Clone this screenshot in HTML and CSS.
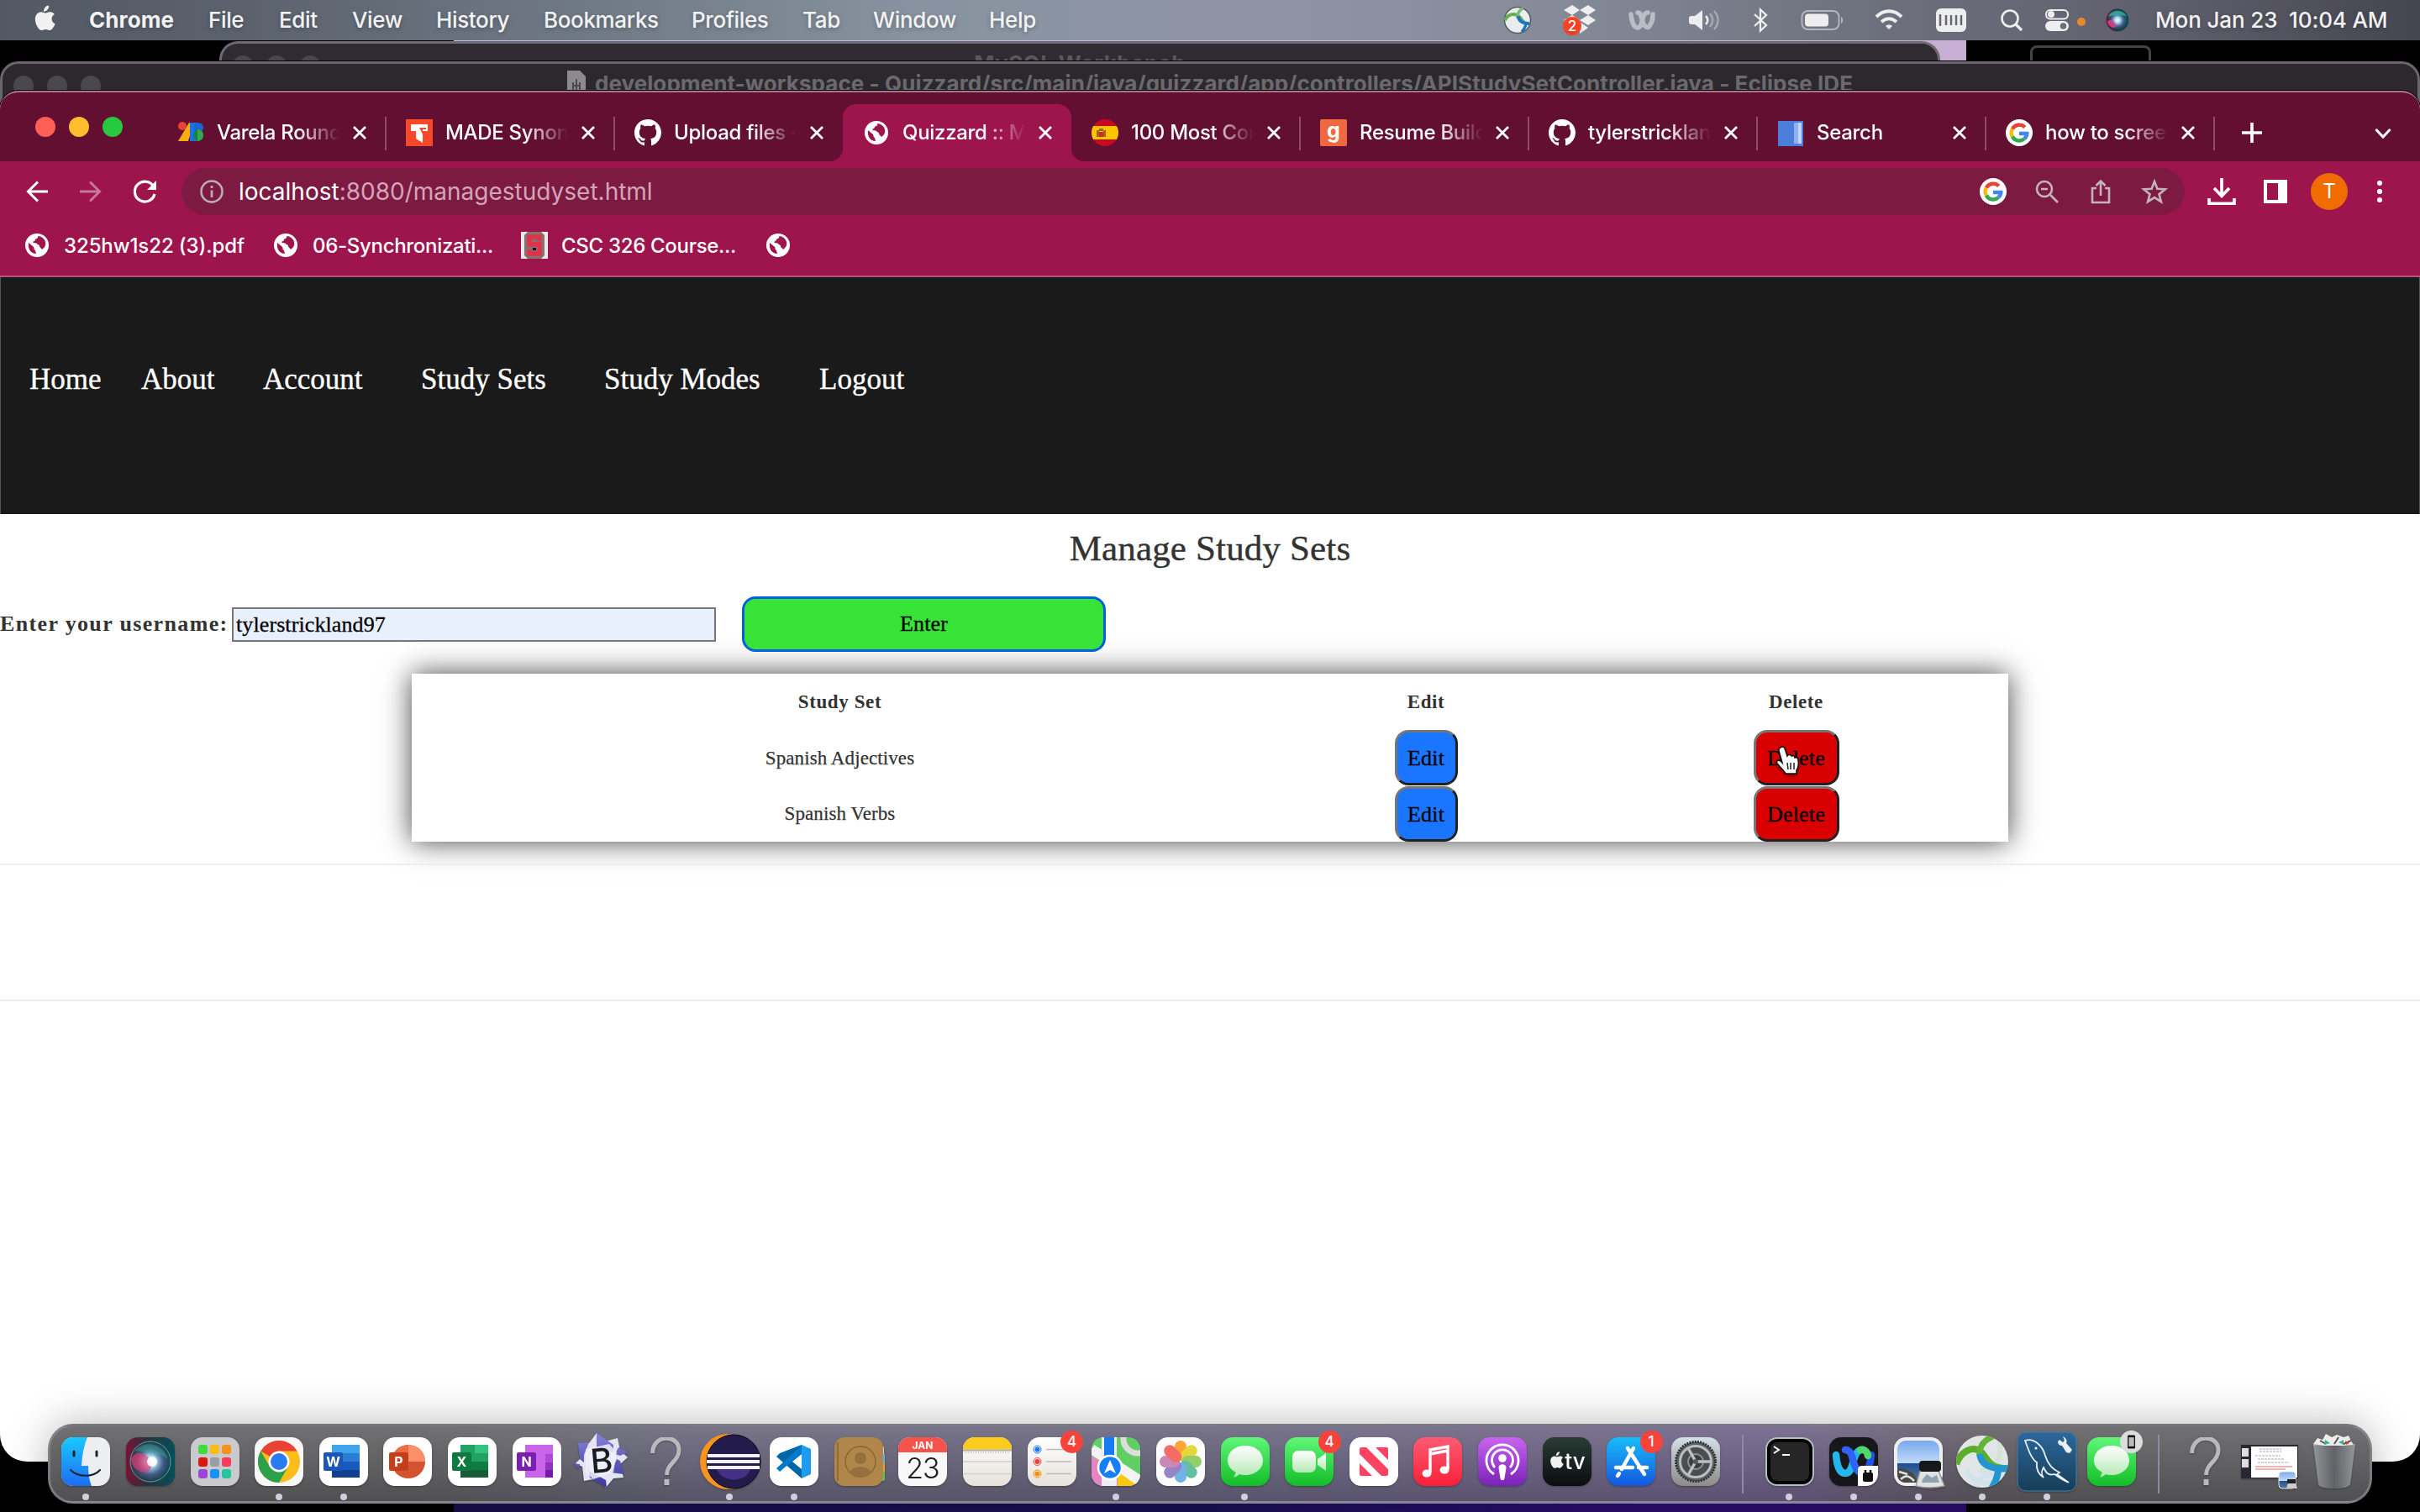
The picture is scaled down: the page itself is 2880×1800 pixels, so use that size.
FILE: index.html
```html
<!DOCTYPE html>
<html lang="en">
<head>
<meta charset="utf-8">
<title>Quizzard :: Manage Study Sets</title>
<link rel="stylesheet" href="styles.css">
</head>
<body>
<svg width="0" height="0" class="defs">
  <defs>
    <symbol id="globe" viewBox="0 0 28 28"><circle cx="14" cy="14" r="14" fill="#fff"/><path d="M4 11l6 5c1 2 0 3 2 4l1 4c-6 0-10-5-9-13zM15 3c1 2-1 3-3 4 0 2-2 2-3 3 1 2 4 1 5 2 1 2 3 1 3 3 0 2 2 2 3 4 3-2 5-5 4-9-1-4-5-7-9-7z" fill="#9e154e"/></symbol>
    <symbol id="github" viewBox="0 0 16 16"><path fill="#fff" d="M8 0C3.58 0 0 3.58 0 8c0 3.54 2.29 6.53 5.47 7.59.4.07.55-.17.55-.38 0-.19-.01-.82-.01-1.49-2.01.37-2.53-.49-2.69-.94-.09-.23-.48-.94-.82-1.13-.28-.15-.68-.52-.01-.53.63-.01 1.08.58 1.23.82.72 1.21 1.87.87 2.33.66.07-.52.28-.87.51-1.07-1.78-.2-3.64-.89-3.64-3.95 0-.87.31-1.59.82-2.15-.08-.2-.36-1.02.08-2.12 0 0 .67-.21 2.2.82.64-.18 1.32-.27 2-.27s1.36.09 2 .27c1.53-1.04 2.2-.82 2.2-.82.44 1.1.16 1.92.08 2.12.51.56.82 1.27.82 2.15 0 3.07-1.87 3.75-3.65 3.95.29.25.54.73.54 1.48 0 1.07-.01 1.93-.01 2.2 0 .21.15.46.55.38A8.01 8.01 0 0 0 16 8c0-4.42-3.58-8-8-8z"/></symbol>
    <symbol id="google" viewBox="0 0 32 32"><circle cx="16" cy="16" r="16" fill="#fff"/><g fill="none" stroke-width="4.4"><path d="M22.8 9.4A9.4 9.4 0 0 0 7.8 11.6" stroke="#ea4335"/><path d="M7.8 11.6a9.4 9.4 0 0 0 0 9" stroke="#fbbc05"/><path d="M7.8 20.6a9.4 9.4 0 0 0 14.4 2.6" stroke="#34a853"/><path d="M22.2 23.2c2-1.8 3.1-4 3.1-6.2H16" stroke="#4285f4"/></g></symbol>
    <symbol id="cross" viewBox="0 0 20 20"><path d="M3 3l14 14M17 3L3 17" stroke="#fff" stroke-width="2.800" fill="none"/></symbol>
    <symbol id="apple" viewBox="0 0 26 32"><path d="M18.2.5c.2 2-.6 3.800-1.700 5.100-1.200 1.400-2.900 2.300-4.500 2.200-.2-1.900.7-3.900 1.700-5.100C14.900 1.400 16.800.5 18.200.5zM24.800 11c-.3.200-3.300 2-3.200 5.600 0 4.300 3.800 5.800 3.900 5.800-.1.200-.6 2.100-2 4.100-1.200 1.800-2.500 3.500-4.500 3.600-1.900 0-2.600-1.200-4.800-1.200s-2.900 1.200-4.700 1.200c-2 .1-3.400-1.900-4.600-3.700C2.400 22.800.5 16.200 3.100 11.800c1.300-2.200 3.500-3.600 6-3.600 1.900 0 3.700 1.300 4.800 1.300 1.200 0 3.300-1.600 5.600-1.300 1 0 3.600.4 5.300 2.800z" fill="#f1f1f1"/></symbol>
    <symbol id="bubble" viewBox="0 0 58 58"><rect width="58" height="58" rx="14" fill="url(#gGreen)"/><path d="M29 10c12 0 21 7.500 21 17.500S41 45 29 45c-3 0-5-.4-7-1-2 2-4 3-7 3.500 1.500-2 2.500-4 2.500-6C11.500 38.500 8 33.500 8 27.500 8 17.500 17 10 29 10z" fill="url(#gBub)"/></symbol>
    <symbol id="ask" viewBox="0 0 58 58"><path d="M13.500 19C14-4.500 45-3.500 45 15c0 14-14.500 16-14.500 30" fill="none" stroke="#b9b9bd" stroke-width="5"/><rect x="27.500" y="50" width="6" height="7" fill="#b9b9bd"/></symbol>
    <linearGradient id="gGreen" x2="0" y2="1"><stop stop-color="#60f77a"/><stop offset="1" stop-color="#12bd27"/></linearGradient>
    <linearGradient id="gBub" x2="0" y2="1"><stop stop-color="#fff"/><stop offset="1" stop-color="#b4e8b4"/></linearGradient>
    <linearGradient id="gFind" x2="0" y2="1"><stop stop-color="#19c9ff"/><stop offset="1" stop-color="#1d6df5"/></linearGradient>
    <linearGradient id="gMusic" x2="0" y2="1"><stop stop-color="#fc5c74"/><stop offset="1" stop-color="#fa2038"/></linearGradient>
    <linearGradient id="gPod" x2="0" y2="1"><stop stop-color="#c964f0"/><stop offset="1" stop-color="#7a22b8"/></linearGradient>
    <linearGradient id="gStore" x2="0" y2="1"><stop stop-color="#18bdfa"/><stop offset="1" stop-color="#1358dd"/></linearGradient>
    <linearGradient id="gTv" x2="0" y2="1"><stop stop-color="#2a3c35"/><stop offset="1" stop-color="#0a0d10"/></linearGradient>
    <linearGradient id="gSet" x2="0" y2="1"><stop stop-color="#d3dfe6"/><stop offset="1" stop-color="#8d8b88"/></linearGradient>
    <linearGradient id="gPaper" x2="0" y2="1"><stop stop-color="#fff"/><stop offset="1" stop-color="#e6e2da"/></linearGradient>
    <linearGradient id="gSql" x2="0" y2="1"><stop stop-color="#2d679b"/><stop offset="1" stop-color="#163d58"/></linearGradient>
    <linearGradient id="gSiri"><stop stop-color="#7a1236"/><stop offset=".45" stop-color="#26333c"/><stop offset="1" stop-color="#04505a"/></linearGradient>
    <linearGradient id="gBbe" x2="0" y2="1"><stop stop-color="#8581da"/><stop offset="1" stop-color="#3c37a0"/></linearGradient>
    <radialGradient id="gOrb"><stop stop-color="#fff"/><stop offset=".3" stop-color="#9fd8ec"/><stop offset=".65" stop-color="#53659c" stop-opacity=".75"/><stop offset="1" stop-color="#17414f" stop-opacity=".6"/></radialGradient>
    <linearGradient id="gBin"><stop stop-color="#9b9fa3"/><stop offset=".5" stop-color="#62676b"/><stop offset="1" stop-color="#9b9fa3"/></linearGradient>
    <linearGradient id="gSky" x2="0" y2="1"><stop stop-color="#78a8ee"/><stop offset=".55" stop-color="#c3dcf7"/><stop offset=".55" stop-color="#1d4f96"/><stop offset="1" stop-color="#5f7a96"/></linearGradient>
  </defs>
</svg>

<div class="desktop">
  <div class="wallpaper"></div>
  <div class="outline-box"></div>

  <header class="menubar">
    <nav class="menus">
      <svg class="apple" width="26" height="32"><use href="#apple"/></svg>
      <b>Chrome</b><span>File</span><span>Edit</span><span>View</span><span>History</span><span>Bookmarks</span><span>Profiles</span><span>Tab</span><span>Window</span><span>Help</span>
    </nav>
    <div class="status">
      <svg width="34" height="34" viewBox="0 0 34 34"><circle cx="17" cy="17" r="15.500" fill="#e9edf0" stroke="#555a5f" stroke-width="1.500"/><path d="M2 17C6 9 14 8 19 13s4 8 12 8" fill="none" stroke="#65ae4c" stroke-width="4"/><path d="M17 15C17 7 20 4 24 3" fill="none" stroke="#7dbb74" stroke-width="3.500"/><path d="M18 12c0 7 5 9 13 9M27 19c0 5-2 9-5 12" fill="none" stroke="#1a74c4" stroke-width="3.500"/></svg>
      <svg width="40" height="38" viewBox="0 0 40 38"><path d="M11 1l9 6-9 6-10-6zM30 1l9 6-9 6-10-6zM11 13l9 6-9 6-10-6zM30 13l9 6-9 6-10-6zM20 21l10 7-10 7z" fill="#eee"/><circle cx="11" cy="26" r="11" fill="#fc4424"/><text x="11" y="32" class="t-badge" font-size="17">2</text></svg>
      <svg width="32" height="24" viewBox="0 0 32 24" fill="none" stroke="#b9bdc6" stroke-width="5.500" stroke-linecap="round"><path d="M3 5c1 10 4 16 8 16s5-7 6-11 3-7 6-7"/><path d="M11 3c4 0 4 5 6 11s6 8 8 5c3-4 4-9 4-14"/></svg>
      <svg width="38" height="28" viewBox="0 0 38 28"><path d="M4 9h4l9-7v24l-9-7H4q-3 0-3-3v-4q0-3 3-3z" fill="#eee"/><path d="M21 9c3 3 3 7 0 10" fill="none" stroke="#eee" stroke-width="2.500"/><path d="M26 6c4 5 4 11 0 16M31 3c6 7 6 15 0 22" fill="none" stroke="#a6aab3" stroke-width="2.500"/></svg>
      <svg width="18" height="28" viewBox="0 0 18 28"><path d="M2 7l14 13-7 6.500v-25L16 8 2 21" fill="none" stroke="#eee" stroke-width="2.300"/></svg>
      <svg width="52" height="26" viewBox="0 0 52 26"><rect x="1.500" y="2" width="44" height="22" rx="7" fill="none" stroke="#b3b6bd" stroke-width="2"/><rect x="5" y="5.500" width="28" height="15" rx="4" fill="#eee"/><path d="M48 9c3 2 3 6 0 8z" fill="#b3b6bd"/></svg>
      <svg width="34" height="26" viewBox="0 0 34 26" fill="none" stroke="#eee" stroke-width="4"><path d="M2 9c9-9 21-9 30 0"/><path d="M8 15c6-5 12-5 18 0"/><path d="M17 24l-4-4c2-2 6-2 8 0z" fill="#eee" stroke="none"/></svg>
      <svg width="36" height="28" viewBox="0 0 36 28"><rect width="36" height="28" rx="6" fill="#eee"/><path d="M5 7v14M12 8v12M18 8v12M24 8v12M30 8v12" stroke="#646874" stroke-width="2.500"/></svg>
      <svg width="28" height="28" viewBox="0 0 28 28"><circle cx="12" cy="12" r="9.500" fill="none" stroke="#eee" stroke-width="2.600"/><path d="M19 19l7 7" stroke="#eee" stroke-width="3.200"/></svg>
      <svg width="28" height="26" viewBox="0 0 28 26"><rect x="1" y="1" width="26" height="10.500" rx="5" fill="none" stroke="#eee" stroke-width="2"/><circle cx="7" cy="6" r="4" fill="#eee"/><rect y="14" width="28" height="12" rx="6" fill="#eee"/><circle cx="21.500" cy="20" r="3.800" fill="#6b6e78"/></svg>
      <svg width="10" height="10" class="low"><circle cx="5" cy="5" r="5" fill="#e5892a"/></svg>
      <svg width="28" height="28" viewBox="0 0 58 58"><circle cx="29" cy="29" r="28" fill="url(#gSiri)"/><circle cx="29" cy="29" r="24" fill="url(#gOrb)"/><path d="M6 20c8-18 36-20 46 0-14-6-24-4-46 0z" fill="#2cb69c" opacity=".8"/><path d="M4 32c8-8 20 0 22 12-8 8-20 0-22-12z" fill="#e0408c" opacity=".8"/></svg>
      <span class="clock">Mon Jan 23&nbsp; 10:04 AM</span>
    </div>
  </header>

  <section class="window workbench">
    <div class="dim-lights"><i></i><i></i><i></i></div>
    <div class="dim-title">MySQL Workbench</div>
  </section>

  <section class="window eclipse">
    <div class="dim-lights"><i></i><i></i><i></i></div>
    <div class="dim-title"><svg width="22" height="28" viewBox="0 0 22 28"><path d="M0 0h15l7 7v21H0z" fill="#8c8a8e"/><path d="M7 14v9M15 14v9M11 10v14M7 18h8" fill="none" stroke="#4b494d" stroke-width="2"/></svg><span>development-workspace - Quizzard/src/main/java/quizzard/app/controllers/APIStudySetController.java - Eclipse IDE</span></div>
  </section>

  <section class="window chrome">
    <div class="tabstrip">
      <div class="lights"><i class="red"></i><i class="yellow"></i><i class="green"></i></div>
      <div class="tab"><svg class="fav" viewBox="0 0 32 32"><path d="M14 4h6L13 26H1z" fill="#fbab12"/><circle cx="6" cy="8" r="5" fill="#e94335"/><path d="M15 4h9v22h-9z" fill="#1a73e8"/><circle cx="25" cy="10" r="6" fill="#1967d2"/><path d="M24 12a7 7 0 0 1 0 14c-6-3-6-11 0-14z" fill="#188038"/><path d="M24 12a7 7 0 0 1 0 14z" fill="#34a853"/></svg><span class="name">Varela Round</span><svg class="x"><use href="#cross"/></svg></div>
      <div class="tab"><svg class="fav" viewBox="0 0 32 32"><rect width="32" height="32" fill="#f8482a"/><path d="M6 6h20v8h-6v14l-8-5v-9H6z" fill="#fff"/><path d="M16 10h8v2h-4v6z" fill="#f8482a"/></svg><span class="name">MADE Synon</span><svg class="x"><use href="#cross"/></svg></div>
      <div class="tab nosep"><svg class="fav"><use href="#github"/></svg><span class="name">Upload files ·</span><svg class="x"><use href="#cross"/></svg></div>
      <div class="tab active"><svg class="fav" viewBox="-2 -2 32 32"><use href="#globe" width="28" height="28"/></svg><span class="name">Quizzard :: Ma</span><svg class="x"><use href="#cross"/></svg></div>
      <div class="tab"><svg class="fav" viewBox="0 0 32 32"><clipPath id="cf"><circle cx="16" cy="16" r="16"/></clipPath><g clip-path="url(#cf)"><rect width="32" height="32" fill="#c60b1e"/><rect y="8" width="32" height="16" fill="#ffc400"/><path d="M6 13h3v8H6zM14 13h3v8h-3zM9 11h5v3H9z" fill="#a5612a"/><path d="M9 15h5v6H9z" fill="#c8302c"/></g></svg><span class="name">100 Most Con</span><svg class="x"><use href="#cross"/></svg></div>
      <div class="tab"><svg class="fav" viewBox="0 0 32 32"><rect width="32" height="32" rx="2" fill="#ef6840"/><text x="16" y="22" font-size="25" class="t-fav">g</text></svg><span class="name">Resume Build</span><svg class="x"><use href="#cross"/></svg></div>
      <div class="tab"><svg class="fav"><use href="#github"/></svg><span class="name">tylerstrickland</span><svg class="x"><use href="#cross"/></svg></div>
      <div class="tab"><svg class="fav" viewBox="0 0 32 32"><path d="M1 2h30v30H1z" fill="#4c7fdc"/><path d="M20 4h9v25h-9z" fill="#8fb1ee"/><path d="M25 4h4v25h-4z" fill="#c2d5f7"/></svg><span class="name">Search</span><svg class="x"><use href="#cross"/></svg></div>
      <div class="tab"><svg class="fav"><use href="#google"/></svg><span class="name">how to screen</span><svg class="x"><use href="#cross"/></svg></div>
      <svg class="plus" width="24" height="24" viewBox="0 0 24 24"><path d="M12 0v24M0 12h24" stroke="#fff" stroke-width="3.600"/></svg>
      <svg class="chev" width="20" height="14" viewBox="0 0 20 14"><path d="M1.500 2l8.500 9 8.500-9" fill="none" stroke="#fff" stroke-width="3"/></svg>
    </div>

    <div class="toolbar">
      <svg width="26" height="26" viewBox="0 0 26 26" fill="none" stroke="#fff" stroke-width="3"><path d="M26 13H3M14 1.500L2.500 13 14 24.500"/></svg>
      <svg width="26" height="26" viewBox="0 0 26 26" fill="none" stroke="#c6779b" stroke-width="3"><path d="M0 13h23M12 1.500L23.500 13 12 24.500"/></svg>
      <svg width="28" height="28" viewBox="0 0 28 28"><path d="M24 8.500A12 12 0 1 0 25 17" fill="none" stroke="#fff" stroke-width="3.200"/><path d="M27 1v11H16z" fill="#fff"/></svg>
      <div class="omnibox">
        <svg class="info" width="28" height="28" viewBox="0 0 28 28"><circle cx="14" cy="14" r="12.500" fill="none" stroke="#b9adb5" stroke-width="2.600"/><path d="M14 12.500V21M14 7v3" stroke="#b9adb5" stroke-width="2.800"/></svg>
        <span class="url">localhost<em>:8080/managestudyset.html</em></span>
        <svg width="32" height="32"><use href="#google"/></svg>
        <svg width="32" height="32" viewBox="0 0 32 32" fill="none" stroke="#c4b3bb" stroke-width="2.600"><circle cx="13" cy="13" r="9"/><path d="M9 13h8M20 20l9 9"/></svg>
        <svg width="32" height="32" viewBox="0 0 32 32" fill="none" stroke="#c4b3bb" stroke-width="2.600"><path d="M11 12H6v17h20V12h-5M16 21V4M10.500 9L16 3.500 21.500 9"/></svg>
        <svg width="32" height="32" viewBox="0 0 32 32" fill="none" stroke="#c4b3bb" stroke-width="2.600"><path d="M16 4l3.400 8.800 9.300.5-7.200 5.900 2.400 9L16 23.100l-7.900 5.100 2.400-9-7.200-5.900 9.300-.5z"/></svg>
      </div>
      <div class="actions">
        <svg width="34" height="32" viewBox="0 0 34 32" fill="none" stroke="#fff" stroke-width="3.600"><path d="M17 0v21M8 12l9 9.500 9-9.500M2 24v6.200h30V24"/></svg>
        <svg width="28" height="28" viewBox="0 0 28 28"><path d="M0 0h28v28H0zM4 4v20h13V4z" fill="#fff" fill-rule="evenodd"/></svg>
        <span class="avatar">T</span>
        <svg width="8" height="28" viewBox="0 0 8 28" fill="#fff"><circle cx="4" cy="4" r="3"/><circle cx="4" cy="14" r="3"/><circle cx="4" cy="24" r="3"/></svg>
      </div>
    </div>

    <div class="bookmarks">
      <svg width="28" height="28"><use href="#globe"/></svg><span>325hw1s22 (3).pdf</span>
      <svg width="28" height="28"><use href="#globe"/></svg><span>06-Synchronizati...</span>
      <svg class="nc" width="32" height="32" viewBox="0 0 32 32"><rect width="32" height="32" fill="#eee9e6"/><path d="M8 0h16l4 4v24l-4 4H8l-4-4V4z" fill="#7d7472"/><path d="M22 11V6H10v9h12v11H10v-5" fill="none" stroke="#e5304a" stroke-width="5.500"/><path d="M14 19h4v3h-4z" fill="#111"/></svg><span>CSC 326 Course...</span>
      <svg width="28" height="28"><use href="#globe"/></svg>
    </div>

    <main class="page">
      <nav class="site-nav"><a>Home</a><a>About</a><a>Account</a><a>Study Sets</a><a>Study Modes</a><a>Logout</a></nav>
      <h1>Manage Study Sets</h1>
      <form class="lookup">
        <label>Enter your username:</label>
        <div class="field">tylerstrickland97</div>
        <button type="button" class="enter">Enter</button>
      </form>
      <table class="sets">
        <tr><th>Study Set</th><th>Edit</th><th>Delete</th></tr>
        <tr><td>Spanish Adjectives</td><td><button type="button" class="btn edit">Edit</button></td><td><button type="button" class="btn delete">Delete</button></td></tr>
        <tr><td>Spanish Verbs</td><td><button type="button" class="btn edit">Edit</button></td><td><button type="button" class="btn delete">Delete</button></td></tr>
      </table>
      <hr><hr class="second">
    </main>
  </section>

  <svg class="cursor" width="32" height="36" viewBox="0 0 32 36"><path d="M8 3c2-2 4-1 5 1l3 9c1-2 4-2 5 0 2-1 4 0 4 2 3-1 4 1 4 3 1 5 0 9-2 12v4H14c-2-4-7-8-10-12-2-3 1-5 4-3l2 2L6 7c-.5-2 .5-3.500 2-4z" fill="#fff" stroke="#111" stroke-width="1.600"/><path d="M16 21l1 8M20 21v8M24 21v8" stroke="#222" stroke-width="1.500"/></svg>

  <div class="dock">
    <div class="cell run"><svg viewBox="0 0 58 58"><rect width="58" height="58" rx="14" fill="#eceef2"/><path d="M14 0h17c-4 10-6 20-7 34h8c0 9 1 17 4 24H14A14 14 0 0 1 0 44V14A14 14 0 0 1 14 0z" fill="url(#gFind)"/><path d="M15 17v5M42 17v5" stroke="#222" stroke-width="3" stroke-linecap="round"/><path d="M11 39c9 9 27 9 35 0" fill="none" stroke="#1d2530" stroke-width="2.200" stroke-linecap="round"/></svg></div>
    <div class="cell"><svg viewBox="0 0 58 58"><rect width="58" height="58" rx="14" fill="url(#gSiri)"/><circle cx="29" cy="29" r="24" fill="url(#gOrb)" stroke="#5ba39a"/><path d="M6 25c8-12 20-4 24 4 2 10-4 14-12 12C10 38 6 33 6 25z" fill="#e8386c" opacity=".65"/><path d="M10 16c14-14 34-8 40 10-10-8-24-8-40-10z" fill="#2cc59a" opacity=".35"/><circle cx="31" cy="29" r="6" fill="#fff" opacity=".9"/></svg></div>
    <div class="cell"><svg viewBox="0 0 58 58"><rect width="58" height="58" rx="14" fill="#c9cacd"/><rect x="9" y="9" width="11" height="11" rx="3" fill="#3fdc3b"/><rect x="23" y="9" width="11" height="11" rx="3" fill="#fcbc12"/><rect x="37" y="9" width="11" height="11" rx="3" fill="#f8931a"/><rect x="9" y="24" width="11" height="11" rx="3" fill="#d9180f"/><rect x="23" y="24" width="11" height="11" rx="3" fill="#9a9da1"/><rect x="37" y="24" width="11" height="11" rx="3" fill="#fb3a5c"/><rect x="9" y="38" width="11" height="11" rx="3" fill="#9a45d6"/><rect x="23" y="38" width="11" height="11" rx="3" fill="#1992f8"/><rect x="37" y="38" width="11" height="11" rx="3" fill="#24c79b"/></svg></div>
    <div class="cell run"><svg viewBox="0 0 58 58"><rect width="58" height="58" rx="14" fill="#f7f7f7"/><circle cx="29" cy="29" r="25" fill="#fcbd18"/><path d="M29 29L7.300 16.500A25 25 0 0 1 50.700 16.500H29z" fill="#e94235"/><path d="M7.300 16.500A25 25 0 0 0 29 54l10.800-18.700L29 29 18.200 35.300z" fill="#2da04b"/><circle cx="29" cy="29" r="12.500" fill="#fff"/><circle cx="29" cy="29" r="10" fill="#2a7bf0"/></svg></div>
    <div class="cell run"><svg viewBox="0 0 58 58"><rect width="58" height="58" rx="14" fill="#fff"/><path d="M15 9h33v10H15z" fill="#41a5ee"/><path d="M15 19h33v10H15z" fill="#2b7cd3"/><path d="M15 29h33v10H15z" fill="#185abd"/><path d="M15 39h33v9H15z" fill="#103f91"/><rect x="5" y="18" width="23" height="22" rx="2" fill="#1a57b8"/><text x="16.500" y="35" font-size="16" class="t-app">W</text></svg></div>
    <div class="cell"><svg viewBox="0 0 58 58"><rect width="58" height="58" rx="14" fill="#fff"/><circle cx="30" cy="29" r="20" fill="#d35230"/><path d="M30 9a20 20 0 0 1 20 20H30z" fill="#ff8f6b"/><path d="M30 9a20 20 0 0 0-20 20h20z" fill="#ed6c47"/><rect x="7" y="18" width="23" height="22" rx="2" fill="#c43e1c"/><text x="18.500" y="35" font-size="16" class="t-app">P</text></svg></div>
    <div class="cell"><svg viewBox="0 0 58 58"><rect width="58" height="58" rx="14" fill="#fff"/><path d="M15 9h17v20H15z" fill="#21a366"/><path d="M32 9h16v10H32z" fill="#33c481"/><path d="M32 19h16v10H32z" fill="#21a366"/><path d="M15 29h33v10H15z" fill="#107c41"/><path d="M15 39h33v9H15z" fill="#185c37"/><rect x="5" y="18" width="23" height="22" rx="2" fill="#0f7a40"/><text x="16.500" y="35" font-size="16" class="t-app">X</text></svg></div>
    <div class="cell"><svg viewBox="0 0 58 58"><rect width="58" height="58" rx="14" fill="#fff"/><path d="M15 9h33v39H15z" fill="#ca64ea"/><path d="M39 20h9v10h-9z" fill="#ae4bd5"/><path d="M39 30h9v9h-9z" fill="#9332bf"/><path d="M39 39h9v9h-9z" fill="#7719aa"/><rect x="5" y="18" width="23" height="22" rx="2" fill="#7a1fae"/><text x="16.500" y="35" font-size="16" class="t-app">N</text></svg></div>
    <div class="cell"><svg viewBox="0 0 58 58"><path d="M2 7l13 0L24-5l10 10 15-4 3 15 9 8-9 8 4 16-12 1-9 11-9-11-17 3-2-17-8-4 8-8z" fill="#e4e4f3"/><path d="M2 7l13-1-6 15v9L4 26zM24-5l20 14v9L24 14zM50 12l11 6-9 4-6-2zM48 26l4 2 4 16-15-2zM13 32l2 8 20 11 1 9-20-12zM-4 32l8 0-1 6z" fill="url(#gBbe)"/><path d="M11 14l28-6 9 10-4 24-24 8-9-8z" fill="#f0f0f8" opacity=".85"/><text x="30" y="42" font-size="40" class="t-b" transform="rotate(-5 30 29)">B</text></svg></div>
    <div class="cell"><svg viewBox="0 0 58 58"><use href="#ask"/></svg></div>
    <div class="cell run"><svg viewBox="0 0 58 58"><ellipse cx="26" cy="29" rx="33" ry="33" fill="#f7941e"/><circle cx="33" cy="29" r="32" fill="#241b4d" stroke="#09081a"/><path d="M13 38h40c-4 16-34 17-40 0z" fill="#443085"/><path d="M2 22h62M1 29h63M2 36h62" stroke="#f3f1f8" stroke-width="4"/></svg></div>
    <div class="cell run"><svg viewBox="0 0 58 58"><rect width="58" height="58" rx="14" fill="#fff"/><path d="M38 9v40L8 23l4-4z" fill="#0065a9"/><path d="M38 9v10L12 41l-4-4 22-20z" fill="#007acc"/><path d="M38 9l11 5v30l-11 5z" fill="#1f9cf0"/><path d="M38 20v18L27 29z" fill="#fff"/></svg></div>
    <div class="cell"><svg viewBox="0 0 58 58"><path d="M50 10h6q3 0 3 3v7h-9z" fill="#d5d2ca"/><path d="M50 20h10v11H50z" fill="#54b7e8"/><path d="M50 31h10v10H50z" fill="#f79a1c"/><path d="M50 41h10v9q0 2-3 2h-7z" fill="#56c35b"/><rect x="0" width="58" height="58" rx="12" fill="#b0864a"/><path d="M4 6v46" stroke="#916a34" stroke-width="2"/><g fill="#96703c"><circle cx="31" cy="29" r="18" fill="none" stroke="#8b6633" stroke-width="1.500"/><circle cx="31" cy="25" r="7"/><path d="M18 42c5-9 21-9 26 0-7 7-19 7-26 0z"/></g></svg></div>
    <div class="cell"><svg viewBox="0 0 58 58"><rect width="58" height="58" rx="14" fill="#f8f8f8"/><path d="M0 18v-4A14 14 0 0 1 14 0h30a14 14 0 0 1 14 14v4z" fill="#f5534c"/><text x="29" y="14" font-size="12" class="t-app">JAN</text><text x="29" y="49" font-size="34" class="t-cal">23</text></svg></div>
    <div class="cell"><svg viewBox="0 0 58 58"><rect width="58" height="58" rx="14" fill="url(#gPaper)"/><path d="M0 14.500V14A14 14 0 0 1 14 0h30a14 14 0 0 1 14 14v.5z" fill="#fdcb1c"/><path d="M0 29h58M0 43.500h58" stroke="#d2d0cb" stroke-width="1.500"/><path d="M0 15.500h58" stroke="#b3afa8" stroke-width="2"/><path d="M2 18h54" stroke="#aaa" stroke-dasharray="1 1"/></svg></div>
    <div class="cell"><svg viewBox="0 0 58 58"><rect width="58" height="58" rx="14" fill="url(#gPaper)"/><path d="M22 14.500h30M22 29h30M22 43.500h30" stroke="#bbb" stroke-width="1.300"/><g fill="none" stroke-width="1"><circle cx="11.500" cy="14.500" r="4.500" stroke="#127bf7"/><circle cx="11.500" cy="29" r="4.500" stroke="#f43c3c"/><circle cx="11.500" cy="43.500" r="4.500" stroke="#f6920c"/></g><circle cx="11.500" cy="14.500" r="3" fill="#127bf7"/><circle cx="11.500" cy="29" r="3" fill="#f43c3c"/><circle cx="11.500" cy="43.500" r="3" fill="#f6920c"/></svg><i class="badge">4</i></div>
    <div class="cell run"><svg viewBox="0 0 58 58"><clipPath id="cm"><rect width="58" height="58" rx="14"/></clipPath><g clip-path="url(#cm)"><rect width="58" height="58" fill="#5fcf64"/><path d="M0 22l58 40H0z" fill="#e685c6"/><path d="M0 14l58 38" stroke="#f3f3f3" stroke-width="12"/><path d="M12 0h18v58H12z" fill="#eee"/><path d="M15 0h12v30H15z" fill="#167af5"/><path d="M31 58h27V54L31 40z" fill="#fcc80c"/><path d="M30 34l28 20" stroke="#f3f3f3" stroke-width="10"/><circle cx="55" cy="2" r="17" fill="none" stroke="#ddd" stroke-width="7"/></g><circle cx="22" cy="36" r="14" fill="#157ef9" stroke="#fff" stroke-width="2.500"/><path d="M22 27l7 16-7-4-7 4z" fill="#fff"/></svg></div>
    <div class="cell"><svg viewBox="0 0 58 58"><rect width="58" height="58" rx="14" fill="#fcfcfc"/><g opacity=".88"><rect x="22" y="4" width="14" height="24" rx="7" fill="#fb9a1b"/><rect x="22" y="4" width="14" height="24" rx="7" fill="#e3d41f" transform="rotate(45 29 29)"/><rect x="22" y="4" width="14" height="24" rx="7" fill="#86c952" transform="rotate(90 29 29)"/><rect x="22" y="4" width="14" height="24" rx="7" fill="#4eb88f" transform="rotate(135 29 29)"/><rect x="22" y="4" width="14" height="24" rx="7" fill="#5fa9e2" transform="rotate(180 29 29)"/><rect x="22" y="4" width="14" height="24" rx="7" fill="#8675bd" transform="rotate(225 29 29)"/><rect x="22" y="4" width="14" height="24" rx="7" fill="#c379ac" transform="rotate(270 29 29)"/><rect x="22" y="4" width="14" height="24" rx="7" fill="#f3594e" transform="rotate(315 29 29)"/></g></svg></div>
    <div class="cell run"><svg viewBox="0 0 58 58"><use href="#bubble"/></svg></div>
    <div class="cell"><svg viewBox="0 0 58 58"><rect width="58" height="58" rx="14" fill="url(#gGreen)"/><rect x="9" y="16" width="28" height="26" rx="7" fill="url(#gBub)"/><path d="M39 26l10-7v21l-10-7z" fill="url(#gBub)"/></svg><i class="badge">4</i></div>
    <div class="cell"><svg viewBox="0 0 58 58"><rect width="58" height="58" rx="14" fill="#fff"/><path d="M12 14q0-2 2-2h6l26 26v6q0 2-2 2h-6L12 20z" fill="#fb4263"/><path d="M31 12h13q2 0 2 2v13zM12 31v13q0 2 2 2h13z" fill="#fb4263"/></svg></div>
    <div class="cell"><svg viewBox="0 0 58 58"><rect width="58" height="58" rx="14" fill="url(#gMusic)"/><path d="M20 42V15l21-4v27M20 20l21-4" fill="none" stroke="#fff" stroke-width="3.400"/><ellipse cx="16" cy="43" rx="5.500" ry="4.500" fill="#fff"/><ellipse cx="37" cy="39" rx="5.500" ry="4.500" fill="#fff"/></svg></div>
    <div class="cell"><svg viewBox="0 0 58 58"><rect width="58" height="58" rx="14" fill="url(#gPod)"/><g fill="none" stroke="#fff" stroke-width="2.800"><path d="M19 44a19 19 0 1 1 20 0"/><path d="M20 36a12.500 12.500 0 1 1 18 0"/></g><circle cx="29" cy="25" r="4.800" fill="#fff"/><path d="M24.500 36c0-5 9-5 9 0l-2 13c-1 3-4 3-5 0z" fill="#fff"/></svg></div>
    <div class="cell"><svg viewBox="0 0 58 58"><rect width="58" height="58" rx="14" fill="url(#gTv)"/><svg x="8" y="17" width="17" height="21" viewBox="0 0 26 32"><use href="#apple" width="26" height="32"/></svg><text x="38.500" y="37.500" font-size="26" class="t-app t-tv">tv</text></svg></div>
    <div class="cell"><svg viewBox="0 0 58 58"><rect width="58" height="58" rx="14" fill="url(#gStore)"/><path d="M32 13L18 38M25 13l20 31M11 36h20M38 36h10M15 43l-2 3" stroke="#fff" stroke-width="4.500" stroke-linecap="round"/></svg><i class="badge">1</i></div>
    <div class="cell"><svg viewBox="0 0 58 58"><rect width="58" height="58" rx="14" fill="url(#gSet)"/><circle cx="29" cy="29" r="23.500" fill="#5e6163" stroke="#2c2f31" stroke-width="3" stroke-dasharray="2 1.200"/><circle cx="29" cy="29" r="18.500" fill="#4b4e50" stroke="#b9bec1" stroke-width="3"/><circle cx="29" cy="29" r="9" fill="#3a3d40" stroke="#8d9194" stroke-width="2"/><path d="M29 29h18M29 29l-9-16M29 29l-9 16" stroke="#babfc2" stroke-width="3.500"/><circle cx="29" cy="29" r="3" fill="#55585b"/></svg></div>
    <div class="sep"></div>
    <div class="cell run"><svg viewBox="0 0 58 58"><rect width="58" height="58" rx="14" fill="#b2c0c2"/><rect x="2" y="2" width="54" height="54" rx="12" fill="#050505"/><rect x="6" y="6" width="46" height="46" rx="8" fill="#262626"/><path d="M10 11l6 4-6 4M20 21h9" fill="none" stroke="#fff" stroke-width="2"/></svg></div>
    <div class="cell run"><svg viewBox="0 0 58 58"><rect width="58" height="58" rx="14" fill="#171719"/><g fill="none" stroke-width="8.500" stroke-linecap="round"><path d="M50 21c-1 10-3 17-7 20" stroke="#2251f0"/><path d="M8 21c1 14 5 22 11 22 7 0 8-9 10-16s5-12 10-12" stroke="#25b6ee"/><path d="M19 15c8 0 8 10 11 18s7 10 11 9" stroke="#2f62f5"/><path d="M37 15c4-1 8 1 9 7" stroke="#4fd86a"/></g><path d="M39 34h19v10a14 14 0 0 1-14 14H34V39q0-5 5-5z" fill="#fff"/><rect x="40" y="42" width="12" height="11" rx="2" fill="#111"/><path d="M40 45h12M43 39v4M49 39v4" stroke="#111" stroke-width="2.500"/></svg></div>
    <div class="cell run"><svg viewBox="0 0 58 58"><rect width="58" height="58" rx="14" fill="#eee"/><rect x="4" y="4" width="50" height="50" rx="10" fill="url(#gSky)"/><path d="M4 38c6-4 12 2 18 4l8 12H14c-6 0-10-4-10-10z" fill="#4b4740"/><path d="M8 50c6-6 10-4 16 2M6 41l10 3" stroke="#d9e3ea" stroke-width="2.500" fill="none"/><path d="M31 40h22l7 18q-18 4-34 0z" fill="#dfe3e4" stroke="#999" stroke-width="1.500"/><path d="M34 50l5-6 6 4 6-3 3 9H33z" fill="#8fa3b0"/><rect x="30" y="28" width="26" height="13" rx="4" fill="#17181a"/></svg></div>
    <div class="cell run"><svg viewBox="0 0 58 58"><clipPath id="cv"><circle cx="29" cy="29" r="31"/></clipPath><g clip-path="url(#cv)"><rect x="-2" y="-2" width="62" height="62" fill="#e2e5e7"/><path d="M20 60c4-14 16-20 34-12M10 40c6 10 18 16 34 14" fill="none" stroke="#cfe3ee" stroke-width="6"/><path d="M26 40c14 0 28-10 24-34" fill="none" stroke="#d5e3d4" stroke-width="6"/><path d="M-2 32C4 16 18 10 27 17s8 21 34 20" fill="none" stroke="#5cae2a" stroke-width="8"/><path d="M26 22C25 10 32 3 42-1" fill="none" stroke="#64b334" stroke-width="7"/><path d="M26 20c2 14 14 19 36 17M48 38c0 8-3 15-8 23" fill="none" stroke="#2495d3" stroke-width="8"/></g></svg></div>
    <div class="cell run"><svg viewBox="0 0 58 58"><rect x="-6" y="-6" width="70" height="70" rx="10" fill="url(#gSql)" stroke="#4782ad"/><path d="M3 4c10-4 21 6 24 18 3 10 8 16 17 20l-3 2 14 10c-8-3-13-7-17-10-8 2-10-2-13-8-3 5-3 8 0 12-6-4-9-10-8-18C10 25 7 15 3 4z" fill="none" stroke="#e7f0f6" stroke-width="1.800"/><circle cx="16" cy="13" r="1.500" fill="#fff"/><path d="M48-1q6 3 4 8l7 8-3 4-4-1-5-8q-5 0-5-5l2-2 4 3 2-2z" fill="#e8f0f5"/></svg></div>
    <div class="cell"><svg viewBox="0 0 58 58"><use href="#bubble"/></svg><i class="badge phone"><svg viewBox="0 0 10 18"><rect width="10" height="18" rx="1.500" fill="#151515"/><rect x="1.500" y="3" width="7" height="12" fill="#b8bdb8"/></svg></i></div>
    <div class="sep"></div>
    <div class="cell"><svg viewBox="0 0 58 58"><use href="#ask"/></svg></div>
    <div class="cell"><svg viewBox="0 0 58 58"><path d="M-5 9h68v40H-5z" fill="#2b2730"/><path d="M7 11h55v37H7z" fill="#fff"/><path d="M-4 13h8v10h-8zM-4 26h8v10h-8z" fill="#ddd"/><path d="M17 14h26M17 17h26M12 22h30M15 26h32M15 30h37" stroke="#aaa" stroke-dasharray="3 1"/><path d="M12 35h44M12 38h36" stroke="#e36b6b"/><rect x="40" y="41" width="20" height="20" rx="4" fill="url(#gSky)" stroke="#eee"/><path d="M51 54h9l2 7H49z" fill="#ccc"/><rect x="50" y="50" width="10" height="5" fill="#222"/></svg></div>
    <div class="cell"><svg viewBox="0 0 58 58"><path d="M4 8l5-7 6 2 4-7 7 4 6-3 8 3 6-2 4 8 3 4H4z" fill="#eeece8"/><path d="M12 4l7 4M34 0l-5 8M40 8l9-4" stroke="#555" stroke-width="2"/><path d="M18 3l6 4-7 2zM34 6l6-3v6z" fill="#29b6a5"/><path d="M42 4l5 3-4 2z" fill="#c84a24"/><path d="M4 8q25 5 50 0l-6 48q-2 5-19 5t-19-5z" fill="url(#gBin)" opacity=".9"/></svg></div>
  </div>
</div>
</body>
</html>
```
FILE: styles.css
```css
* { box-sizing: border-box; }
body { margin: 0; background: #000; font-family: Inter, "Liberation Sans", sans-serif; }
.defs { position: absolute; }
svg { display: block; flex: none; overflow: visible; }
.desktop { position: relative; width: 2880px; height: 1800px; overflow: hidden; background: #000; }
.wallpaper { position: absolute; left: 540px; top: 48px; width: 1800px; height: 1752px; background: linear-gradient(90deg, #b0bfe0 0, #b7bfe0 75%, #c6afd2 96%, #c6afd2) top / 100% 40px no-repeat, linear-gradient(90deg, #190f4e, #1a1055 50%, #2a0d6e 75%); }
.outline-box { position: absolute; left: 2416px; top: 54px; width: 144px; height: 60px; border: 3px solid #444; border-radius: 8px; }

/* menu bar */
.menubar { position: relative; height: 48px; background: linear-gradient(90deg, #525963 0, #5b626d 10%, #75808c 28%, #8793a0 38%, #8f94a5 52%, #868b9a 64%, #6f737f 76%, #5e5e6b 90%, #45454f 100%); color: #f2f2f2; font-size: 26px; line-height: 48px; text-shadow: 0 2px 5px rgba(0,0,0,.25); display: grid; grid-template-columns: 1789px 1fr; white-space: nowrap; }
.menus { display: grid; grid-template-columns: 66px 142px 84px 87px 100px 128px 176px 132px 84px 138px auto; padding-left: 40px; letter-spacing: -.35px; font-weight: 500; }
.menus .apple { margin-top: 6px; }
.menus b { font-weight: 700; letter-spacing: .1px; }
.status { display: grid; grid-template-columns: 71px 78px 71px 77px 57px 88px 73px 76px 54px 38px 34px 59px auto; align-items: center; }
.status .low { margin-top: 4px; }
.clock { font-weight: 500; letter-spacing: -.12px; }

/* windows */
.window { position: absolute; overflow: hidden; }
.workbench { left: 261px; top: 49px; width: 2048px; height: 25px; border-radius: 22px 22px 0 0; background: #302b32; border: 3px solid #6f6a72; border-bottom: 0; }
.eclipse { left: 0; top: 73px; width: 2880px; height: 80px; border-radius: 22px; background: #2c282e; border: 3px solid #69656b; box-shadow: 0 0 0 1px #000; }
.dim-lights { position: absolute; left: 13px; top: 14px; display: flex; gap: 16px; }
.dim-lights i { width: 24px; height: 24px; border-radius: 50%; background: #4b474e; }
.dim-title { display: flex; justify-content: center; gap: 11px; align-items: center; color: #6c696e; font-size: 26px; font-weight: 700; line-height: 30px; padding-top: 9px; letter-spacing: .07px; white-space: nowrap; }
.workbench .dim-title { padding-top: 9px; font-size: 26px; letter-spacing: .4px; color: #5b575e; }
.eclipse .dim-title svg { margin-top: -4px; }

.chrome { left: 0; top: 108px; width: 2880px; height: 1632px; border-radius: 22px 22px 32px 32px; background: #fff; box-shadow: 0 0 0 1px #000; }
.chrome::after { content: ""; position: absolute; inset: 0 0 auto; height: 84px; border-top: 2px solid #a8758c; border-radius: 22px 22px 0 0; pointer-events: none; }
.tabstrip { height: 84px; padding-top: 16px; background: #630f31; display: flex; align-items: flex-start; color: #fff; }
.lights { width: 187px; padding: 15px 0 0 42px; display: flex; gap: 16px; }
.lights i { width: 24px; height: 24px; border-radius: 50%; }
.red { background: #ff5f57; }
.yellow { background: #febc2e; }
.green { background: #28c840; }
.tab { position: relative; width: 272px; height: 68px; padding-left: 24px; display: flex; align-items: center; font-size: 24px; }
.tab .fav { width: 32px; height: 32px; }
.tab .name { width: 146px; margin: 0 14px 0 15px; overflow: hidden; white-space: nowrap; letter-spacing: -.3px; line-height: 32px; font-weight: 500; -webkit-mask-image: linear-gradient(90deg, #000 65%, transparent 100%); mask-image: linear-gradient(90deg, #000 65%, transparent 100%); }
.tab .x { width: 20px; height: 20px; }
.tab:not(.nosep):not(.active)::after { content: ""; position: absolute; right: -1px; top: 15px; width: 2px; height: 40px; background: #8f4f6a; }
.tab.active { background: #9e154e; border-radius: 16px 16px 0 0; }
.tab.active::before { content: ""; position: absolute; left: -16px; right: -16px; bottom: 0; height: 16px; background: radial-gradient(circle at 0 0, transparent 16px, #9e154e 16.5px) left / 16px 16px no-repeat, radial-gradient(circle at 100% 0, transparent 16px, #9e154e 16.5px) right / 16px 16px no-repeat; }
.plus { margin: 22px 0 0 33px; }
.chev { margin: 28px 0 0 134px; }

.toolbar { height: 72px; background: #9e154e; display: grid; grid-template-columns: 64px 64px 57px 2384px 1fr; align-items: center; padding-left: 31px; }
.omnibox { height: 56px; border-radius: 28px; background: #7c1a42; display: flex; align-items: center; gap: 32px; padding: 0 20px 0 22px; }
.info { margin-right: -14px; }
.url { flex: 1; font-size: 28px; color: #fff; letter-spacing: 0; }
.url em { font-style: normal; color: #d4a5b8; }
.actions { display: flex; align-items: center; padding-left: 27px; gap: 33px; }
.avatar { width: 44px; height: 44px; margin: 0 5px 0 -9px; position: relative; left: 4px; border-radius: 50%; background: #f06c00; color: #fff; font-size: 24px; line-height: 44px; text-align: center; }

.bookmarks { height: 66px; border-bottom: 2px solid #b8527c; background: #9e154e; display: grid; grid-template-columns: 46px 250px 46px 248px 48px 244px 28px; align-items: center; padding: 0 0 8px 30px; color: #fff; font-size: 24px; font-weight: 500; letter-spacing: -.3px; white-space: nowrap; }
.bookmarks span:first-of-type { letter-spacing: -.1px; }

/* page */
.page { font-family: "Liberation Serif", serif; color: #333; }
.site-nav { height: 282px; background: #1a1a1a; border-left: 1px solid #555; border-right: 1px solid #555; padding: 102px 0 0 34px; display: grid; grid-template-columns: 133px 145px 188px 218px 256px auto; color: #fff; font-size: 35px; line-height: 40px; -webkit-text-stroke: .35px #fff; white-space: nowrap; }
h1 { margin: 0; padding-top: 18px; height: 98px; font-weight: 400; font-size: 43px; line-height: 46px; text-align: center; letter-spacing: .15px; -webkit-text-stroke: .4px #333; }
.lookup { height: 66px; display: flex; align-items: center; font-size: 26px; white-space: nowrap; }
.lookup label { width: 276px; font-weight: 700; letter-spacing: 1.35px; }
.field { width: 576px; height: 41px; margin-right: 31px; border: 2px solid #767676; background: #e8f0fe; color: #000; padding-left: 3px; line-height: 37px; letter-spacing: .1px; -webkit-text-stroke: .3px #000; }
.enter { width: 433px; height: 66px; border: 3px solid #0060df; border-radius: 16px; background: #37e337; font: 26px "Liberation Serif", serif; letter-spacing: .1px; color: #000; -webkit-text-stroke: .3px #000; }
.sets { margin: 26px 0 26px 490px; width: 1900px; height: 200px; table-layout: fixed; border-collapse: collapse; background: #fff; box-shadow: 0 0 32px #444; text-align: center; font-size: 23px; }
.sets th:nth-child(1) { width: 1019px; }
.sets th:nth-child(2) { width: 376px; }
.sets th { height: 67px; padding: 0; letter-spacing: .6px; }
.sets td { height: 66px; padding: 1px 0 0; letter-spacing: .1px; -webkit-text-stroke: .25px #333; }
.btn { display: block; height: 66px; margin: -1px auto 0; padding: 2px 0 0; border: 3px solid; border-color: #767676 #212121 #212121 #767676; border-radius: 16px; font: 26px "Liberation Serif", serif; letter-spacing: .2px; color: #000; -webkit-text-stroke: .3px #000; }
.edit { width: 75px; background: #1a75ff; }
.delete { width: 102px; background: #d80000; }
hr { margin: 0; border: 0; height: 2px; background: #eee; }
hr.second { margin-top: 160px; }
.cursor { position: absolute; left: 2111px; top: 887px; filter: drop-shadow(0 2px 2px rgba(0,0,0,.4)); }

/* dock */
.dock { position: absolute; left: 57px; top: 1695px; width: 2766px; height: 95px; border-radius: 30px; border: 3px solid rgba(150,150,158,.55); background: linear-gradient(rgba(255,255,255,.13), rgba(0,0,0,.13)), linear-gradient(90deg, #5c5c5e 0, #5c5c5e 16%, #646177 28%, #64607a 50%, #6b5d84 75%, #5c5860 83%, #5c5c5e 88%, #5c5c5e); box-shadow: 0 0 50px rgba(0,0,0,.28); display: flex; padding-left: 4px; }
.cell { position: relative; width: 76.64px; padding: 13px 0 0 9.300px; flex: none; }
.cell > svg { width: 58px; height: 58px; filter: drop-shadow(0 1px 1px rgba(0,0,0,.3)); }
.cell.run::after { content: ""; position: absolute; left: 34px; top: 80px; width: 8px; height: 8px; border-radius: 50%; background: #d2cedd; }
.sep { width: 2px; height: 70px; margin: 10px 16px 0 17px; background: #8f8a9c; flex: none; }
.badge { position: absolute; right: 1px; top: 5px; width: 27px; height: 27px; border-radius: 50%; background: #f8433b; color: #fff; font: 500 17px/27px Inter, sans-serif; text-align: center; }
.badge.phone { background: #dcdcdc; display: grid; place-items: center; }
.badge.phone svg { width: 9px; height: 17px; }
.t-badge, .t-fav, .t-app, .t-cal, .t-b { font-family: Inter, sans-serif; text-anchor: middle; fill: #fff; font-weight: 700; }
.t-badge { font-weight: 500; }
.t-tv { font-weight: 500; }
.t-cal { font-weight: 300; fill: #222; letter-spacing: -1px; }
.t-b { fill: #1b1b22; font-weight: 500; }
```
